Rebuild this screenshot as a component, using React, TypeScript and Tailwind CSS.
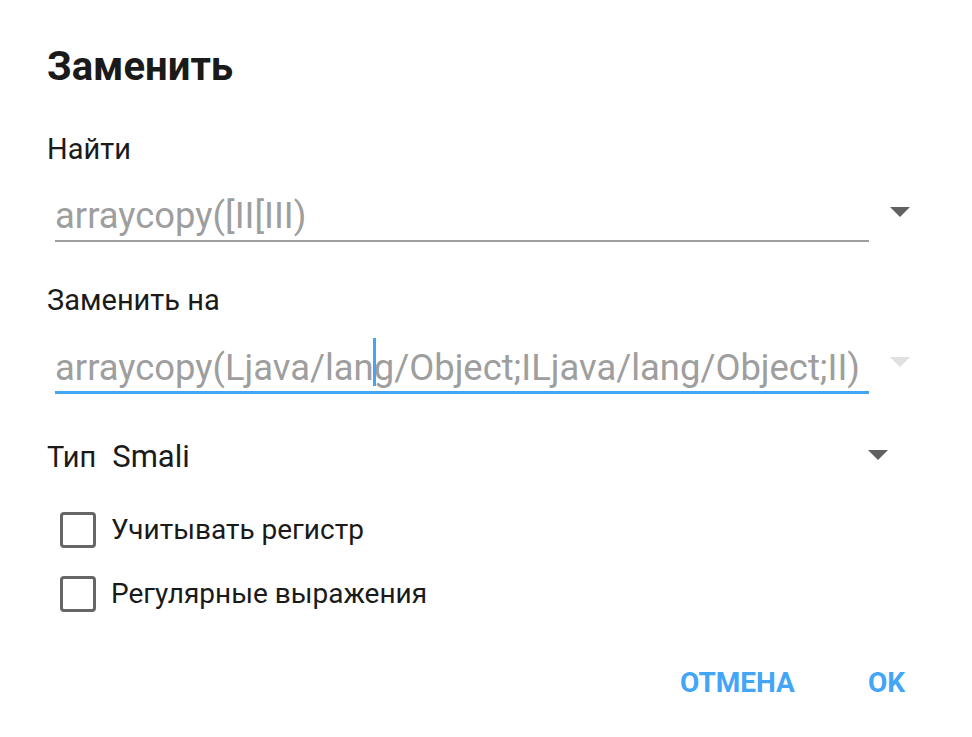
import React from 'react';

function Caret({ light }: { light?: boolean }) {
  return (
    <svg width="20" height="10" viewBox="0 0 20 10" className="shrink-0 block">
      <polygon points="0,0 20,0 10,10" fill={light ? '#e0e0e0' : '#616161'} />
    </svg>
  );
}

function Checkbox({ label }: { label: string }) {
  return (
    <div className="flex items-center h-[36px]">
      <div className="w-[36px] h-[36px] rounded-[4px] border-[3px] border-[#666666] shrink-0" />
      <span className="ml-[15px] text-[28px] text-[#1a1a1a]">{label}</span>
    </div>
  );
}

export default function App() {
  return (
    <div
      className="w-[972px] h-[737px] bg-white overflow-hidden"
      style={{ fontFamily: 'Roboto, "Noto Sans", sans-serif' }}
    >
      <div className="pl-[47px] pr-[62px] pt-[43px]">
        <h1 className="text-[40px] font-bold leading-[48px] text-[#1a1a1a]">Заменить</h1>

        <div className="mt-[41px] text-[29px] leading-[34px] text-[#1a1a1a]">Найти</div>
        <div className="flex items-start mt-[28px]">
          <div className="flex-1 ml-[8px] border-b-[2px] border-[#9e9e9e] pb-[2px]">
            <div className="text-[36.4px] leading-[44px] text-[#9e9e9e] whitespace-nowrap">arraycopy([II[III)</div>
          </div>
          <div className="ml-[21px] mt-[13px]">
            <Caret />
          </div>
        </div>

        <div className="mt-[41px] text-[29px] leading-[34px] text-[#1a1a1a]">Заменить на</div>
        <div className="flex items-start mt-[29px]">
          <div className="flex-1 ml-[8px] border-b-[3px] border-[#42a5f5] pb-[1px]">
            <div className="text-[36.4px] leading-[44px] text-[#9e9e9e] whitespace-nowrap">
              <span className="relative">
                arraycopy(Ljava/lan
                <span className="absolute right-[-2px] top-[-8px] w-[3px] h-[48px] bg-[#42a5f5]" />
              </span>
              g/Object;ILjava/lang/Object;II)
            </div>
          </div>
          <div className="ml-[21px] mt-[11px]">
            <Caret light />
          </div>
        </div>

        <div className="flex items-start mt-[46px] pr-[22px]">
          <span className="text-[29px] leading-[34px] text-[#1a1a1a]">Тип</span>
          <span className="ml-[16px] text-[31px] leading-[34px] text-[#1a1a1a]">Smali</span>
          <div className="flex-1" />
          <div className="mt-[10px]">
            <Caret />
          </div>
        </div>

        <div className="ml-[13px] mt-[38px] flex flex-col gap-[28px]">
          <Checkbox label="Учитывать регистр" />
          <Checkbox label="Регулярные выражения" />
        </div>

        <div className="flex justify-end items-start mt-[54px] pr-[5px] gap-[73px]">
          <span className="text-[28px] leading-[34px] font-bold text-[#42a5f5]">ОТМЕНА</span>
          <span className="text-[28px] leading-[34px] font-bold text-[#42a5f5]">OK</span>
        </div>
      </div>
    </div>
  );
}
